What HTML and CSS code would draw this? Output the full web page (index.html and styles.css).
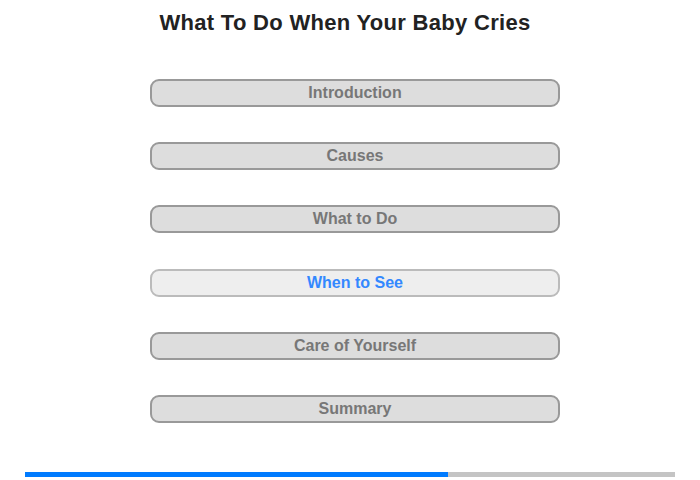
FILE: index.html
```html
<!DOCTYPE html>
<html>
<head>
<meta charset="utf-8">
<link rel="stylesheet" href="styles.css">
</head>
<body>
<div class="page">
  <h1 class="title">What To Do When Your Baby Cries</h1>
  <nav class="menu">
    <div class="item">Introduction</div>
    <div class="item">Causes</div>
    <div class="item">What to Do</div>
    <div class="item active">When to See</div>
    <div class="item">Care of Yourself</div>
    <div class="item">Summary</div>
  </nav>
  <div class="progress"><div class="fill" style="width:423px"></div></div>
</div>
</body>
</html>
```
FILE: styles.css
```css
html, body { margin: 0; padding: 0; background: #fff; }
body { font-family: "Liberation Sans", Arial, sans-serif; }
.page { width: 700px; height: 480px; display: flex; flex-direction: column; }
.title {
  margin: 10px 0 0 0;
  width: 690px;
  text-align: center;
  font-size: 22px;
  line-height: 26px;
  font-weight: bold;
  letter-spacing: 0.3px;
  color: #222;
}
.menu {
  margin: 43px 0 0 150px;
  width: 410px;
  display: flex;
  flex-direction: column;
  gap: 35.2px;
}
.item {
  box-sizing: border-box;
  height: 28px;
  border: 2px solid #999;
  border-radius: 9px;
  background: #ddd;
  color: #777;
  font-size: 16px;
  font-weight: bold;
  line-height: 24px;
  text-align: center;
}
.item.active {
  background: #eee;
  border-color: #bbb;
  color: #3388ff;
}
.progress {
  margin: 49px 0 0 25px;
  width: 650px;
  height: 5px;
  background: #c4c4c4;
}
.fill { height: 5px; background: #007bff; }
```
